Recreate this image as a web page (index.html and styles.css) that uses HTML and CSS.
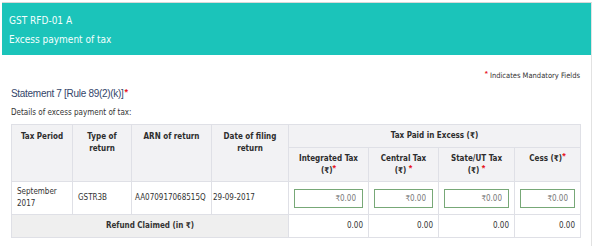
FILE: index.html
```html
<!DOCTYPE html>
<html lang="en">
<head>
  <meta charset="UTF-8">
  <title>GST RFD-01 A</title>
  <link rel="stylesheet" href="styles.css">
</head>
<body>
  <div class="panel">
    <div class="panel-head">
      <div>GST RFD-01 A</div>
      <div>Excess payment of tax</div>
    </div>

    <div class="panel-body">
      <p class="mandatory-note"><span class="req">*</span> Indicates Mandatory Fields</p>
      <h4 class="statement">Statement 7 [Rule 89(2)(k)]<span class="req">*</span></h4>
      <p class="details">Details of excess payment of tax:</p>

      <table class="refund-table">
        <colgroup>
          <col class="w-period">
          <col class="w-type">
          <col class="w-arn">
          <col class="w-date">
          <col class="w-igst">
          <col class="w-cgst">
          <col class="w-sgst">
          <col class="w-cess">
        </colgroup>
        <thead>
          <tr>
            <th rowspan="2" class="top">Tax Period</th>
            <th rowspan="2" class="top">Type of<br>return</th>
            <th rowspan="2" class="top">ARN of return</th>
            <th rowspan="2" class="top">Date of filing<br>return</th>
            <th colspan="4">Tax Paid in Excess (₹)</th>
          </tr>
          <tr class="sub">
            <th>Integrated Tax<br>(₹)<span class="req">*</span></th>
            <th>Central Tax<br>(₹) <span class="req">*</span></th>
            <th>State/UT Tax<br>(₹) <span class="req">*</span></th>
            <th>Cess (₹)<span class="req">*</span></th>
          </tr>
        </thead>
        <tbody>
          <tr class="data-row">
            <td>September 2017</td>
            <td>GSTR3B</td>
            <td class="tight">AA070917068515Q</td>
            <td class="tighter">29-09-2017</td>
            <td><input type="text" class="amount" value="₹0.00"></td>
            <td><input type="text" class="amount" value="₹0.00"></td>
            <td><input type="text" class="amount" value="₹0.00"></td>
            <td><input type="text" class="amount" value="₹0.00"></td>
          </tr>
          <tr class="total-row">
            <td colspan="4" class="total-label">Refund Claimed (in ₹)</td>
            <td class="num">0.00</td>
            <td class="num">0.00</td>
            <td class="num">0.00</td>
            <td class="num">0.00</td>
          </tr>
        </tbody>
      </table>
    </div>
  </div>
</body>
</html>
```

FILE: styles.css
```css
body {
  margin: 0;
  padding: 2px 0 0 2px;
  background: #fff;
  font-family: "DejaVu Sans Condensed", "DejaVu Sans", sans-serif;
  color: #333;
}

.panel {
  width: 589px;
  height: 244px;
  border-top: 1px solid #d8d8d8;
  border-right: 1px solid #e2e2e2;
}

.panel-head {
  background: #1bc4ba;
  color: #f4fffe;
  font-size: 10px;
  line-height: 19px;
  padding: 8px 7px 6px;
}

.panel-body {
  padding: 0 11px 0 9px;
}

/* red mark for mandatory fields */
.req {
  color: #e8141c;
  font-family: "Liberation Sans", sans-serif;
  font-weight: bold;
  font-size: 9px;
  line-height: 0;
  vertical-align: 2px;
}

.mandatory-note {
  margin: 15px 0 0;
  text-align: right;
  font-size: 7.5px;
  line-height: 12px;
  color: #333;
}

.mandatory-note .req {
  font-size: 8px;
}

.statement {
  margin: 5px 0 0;
  font-family: "Liberation Sans", sans-serif;
  font-weight: normal;
  font-size: 10px;
  letter-spacing: -0.3px;
  line-height: 14px;
  color: #34466a;
}

.statement .req {
  letter-spacing: 0;
  margin-left: 1px;
}

.details {
  margin: 6px 0 0;
  font-size: 8px;
  line-height: 12px;
  color: #333;
}

/* table */
.refund-table {
  margin-top: 5px;
  width: 569px;
  border-collapse: collapse;
  table-layout: fixed;
  font-size: 8px;
  line-height: 12px;
}

.w-period { width: 61px; }
.w-type { width: 59px; }
.w-arn { width: 80px; }
.w-date { width: 77px; }
.w-igst { width: 80px; }
.w-cgst { width: 70px; }
.w-sgst { width: 76px; }
.w-cess { width: 66px; }

.refund-table th,
.refund-table td {
  border: 1px solid #dfe0e6;
}

.refund-table th {
  background: #f2f2f4;
  color: #2d2d2d;
  font-weight: bold;
  text-align: center;
  padding: 5px 4px;
  white-space: nowrap;
}

.refund-table th.top {
  vertical-align: top;
  padding-top: 6px;
}

.refund-table .sub th {
  vertical-align: top;
  padding: 5px 4px 4px;
}

.refund-table td {
  padding: 0 5px;
  vertical-align: middle;
  white-space: nowrap;
}

.data-row td {
  height: 32px;
  padding-top: 0;
  padding-bottom: 0;
  white-space: normal;
}

.data-row td.tight {
  padding-left: 3px;
  padding-right: 0;
  white-space: nowrap;
}

.data-row td.tighter {
  padding-left: 1px;
  padding-right: 0;
}

.amount {
  display: block;
  box-sizing: border-box;
  width: 100%;
  height: 19px;
  margin: 0;
  padding: 0 6px;
  border: 1px solid #77a877;
  font-family: "DejaVu Sans Condensed", "DejaVu Sans", sans-serif;
  font-size: 8px;
  color: #777;
  text-align: right;
  background: #fff;
  outline: none;
}

.total-row td {
  height: 22px;
}

.total-label {
  background: #efefef;
  font-weight: bold;
  text-align: center;
}

.num {
  text-align: right;
}
```
